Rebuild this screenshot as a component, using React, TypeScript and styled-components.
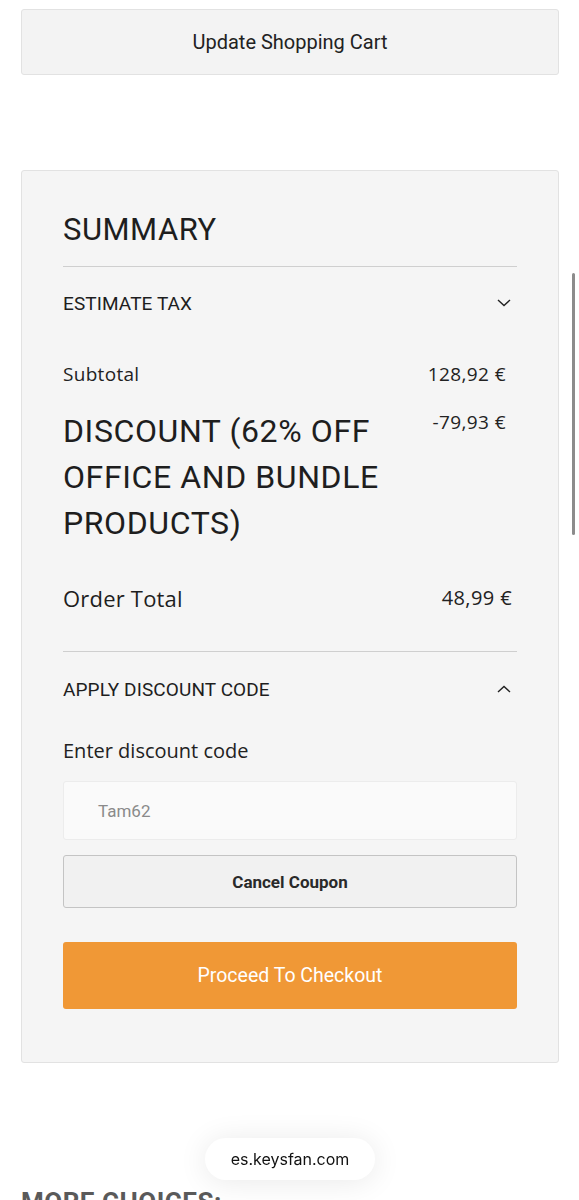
import React from 'react';
import styled, { createGlobalStyle } from 'styled-components';

const GlobalS = createGlobalStyle`
  html, body {
    margin: 0;
    padding: 0;
    background: #fff;
  }
  body {
    font-family: Roboto, "Liberation Sans", sans-serif;
    color: #222;
  }
`;

const PageS = styled.div`
  padding: 9px 20px 0 21px;
  overflow: hidden;
  height: 1191px;
`;

const GreyButtonS = styled.button`
  display: flex;
  width: 100%;
  align-items: center;
  justify-content: center;
  height: 66px;
  background: #f3f3f3;
  border: 1px solid #e2e2e2;
  border-radius: 3px;
  font-family: Roboto, "Liberation Sans", sans-serif;
  font-size: 20px;
  color: #222;
  padding: 0;
`;

const CardS = styled.section`
  margin-top: 95px;
  background: #f5f5f5;
  border: 1px solid #e2e2e2;
  border-radius: 3px;
  padding: 41px 41px 53px;
`;

const TitleS = styled.h2`
  margin: 0;
  font-size: 31px;
  line-height: 36px;
  font-weight: 400;
  letter-spacing: 0.5px;
  color: #1e1e1e;
  padding-bottom: 18px;
  border-bottom: 1px solid #cfcfcf;
`;

const ToggleRowS = styled.div<{ h: number }>`
  display: flex;
  align-items: center;
  justify-content: space-between;
  height: ${({ h }) => h}px;
  font-size: 19px;
  letter-spacing: 0.1px;
  color: #1e1e1e;
  svg {
    margin-right: 6px;
  }
`;

const TableS = styled.div`
  margin-top: 23px;
  display: flex;
  flex-direction: column;
`;

const LineS = styled.div<{ gap?: number }>`
  display: flex;
  justify-content: space-between;
  align-items: flex-start;
  margin-top: ${({ gap }) => gap || 0}px;
`;

const SmallLabelS = styled.span`
  font-family: "Open Sans", sans-serif;
  font-size: 19px;
  line-height: 24px;
  letter-spacing: 0.3px;
  color: #222;
`;

const AmountS = styled.span<{ size?: number; pr?: number; pt?: number }>`
  font-family: "Open Sans", sans-serif;
  font-size: ${({ size }) => size || 19}px;
  line-height: 24px;
  letter-spacing: 0.4px;
  color: #222;
  padding-right: ${({ pr }) => pr ?? 11}px;
  padding-top: ${({ pt }) => pt || 0}px;
  white-space: nowrap;
`;

const DiscountS = styled.span`
  font-size: 32px;
  line-height: 46px;
  letter-spacing: 0.6px;
  color: #1e1e1e;
  max-width: 345px;
`;

const TotalLabelS = styled.span`
  font-family: "Open Sans", sans-serif;
  font-size: 22px;
  line-height: 28px;
  letter-spacing: 0.2px;
  color: #1e1e1e;
`;

const DividerS = styled.div`
  margin-top: 39px;
  border-top: 1px solid #cfcfcf;
`;

const FieldLabelS = styled.label`
  display: block;
  margin-top: 12px;
  font-family: "Open Sans", sans-serif;
  font-size: 20px;
  line-height: 26px;
  color: #222;
`;

const InputS = styled.div`
  margin-top: 17px;
  height: 59px;
  box-sizing: border-box;
  display: flex;
  align-items: center;
  padding-left: 34px;
  background: #fafafa;
  border: 1px solid #ececec;
  border-radius: 3px;
  font-family: Roboto, sans-serif;
  font-size: 17px;
  color: #8a8a8a;
`;

const OutlineButtonS = styled.button`
  margin-top: 15px;
  width: 100%;
  height: 53px;
  background: #f1f1f1;
  border: 1px solid #c4c4c4;
  border-radius: 3px;
  font-family: Roboto, sans-serif;
  font-weight: 700;
  font-size: 17px;
  color: #2a2a2a;
`;

const PrimaryButtonS = styled.button`
  margin-top: 34px;
  width: 100%;
  height: 67px;
  background: #f09836;
  border: none;
  border-radius: 3px;
  font-family: Roboto, sans-serif;
  font-size: 19.5px;
  color: #fff;
`;

const MoreS = styled.h3`
  margin: 124px 0 0;
  font-family: Roboto, sans-serif;
  font-weight: 700;
  font-size: 26px;
  color: #5a5a5a;
  letter-spacing: 0.5px;
`;

const PillS = styled.div`
  position: fixed;
  left: 205px;
  top: 1138px;
  width: 170px;
  height: 42px;
  border-radius: 21px;
  background: #fff;
  box-shadow: 0 2px 30px rgba(0, 0, 0, 0.09);
  display: flex;
  align-items: center;
  justify-content: center;
  font-family: Inter, sans-serif;
  font-size: 16px;
  color: #111;
`;

const ScrollThumbS = styled.div`
  position: fixed;
  right: 4px;
  top: 273px;
  width: 3px;
  height: 262px;
  border-radius: 2px;
  background: #8c8c8c;
`;

const Chevron: React.FC<{ up?: boolean }> = ({ up }) => (
  <svg width="14" height="8" viewBox="0 0 14 8" fill="none">
    <polyline
      points={up ? '1,7 7,1.5 13,7' : '1,1 7,6.5 13,1'}
      stroke="#222"
      strokeWidth="1.4"
    />
  </svg>
);

export default function App() {
  return (
    <>
      <GlobalS />
      <PageS>
        <GreyButtonS>Update Shopping Cart</GreyButtonS>
        <CardS>
          <TitleS>SUMMARY</TitleS>
          <ToggleRowS h={72}>
            ESTIMATE TAX
            <Chevron />
          </ToggleRowS>
          <TableS>
            <LineS>
              <SmallLabelS>Subtotal</SmallLabelS>
              <AmountS>128,92 €</AmountS>
            </LineS>
            <LineS gap={22}>
              <DiscountS>DISCOUNT (62% OFF OFFICE AND BUNDLE PRODUCTS)</DiscountS>
              <AmountS pt={2}>-79,93 €</AmountS>
            </LineS>
            <LineS gap={38}>
              <TotalLabelS>Order Total</TotalLabelS>
              <AmountS size={20} pr={5} pt={2}>48,99 €</AmountS>
            </LineS>
          </TableS>
          <DividerS />
          <ToggleRowS h={74}>
            APPLY DISCOUNT CODE
            <Chevron up />
          </ToggleRowS>
          <FieldLabelS>Enter discount code</FieldLabelS>
          <InputS>Tam62</InputS>
          <OutlineButtonS>Cancel Coupon</OutlineButtonS>
          <PrimaryButtonS>Proceed To Checkout</PrimaryButtonS>
        </CardS>
        <MoreS>MORE CHOICES:</MoreS>
      </PageS>
      <PillS>es.keysfan.com</PillS>
      <ScrollThumbS />
    </>
  );
}
